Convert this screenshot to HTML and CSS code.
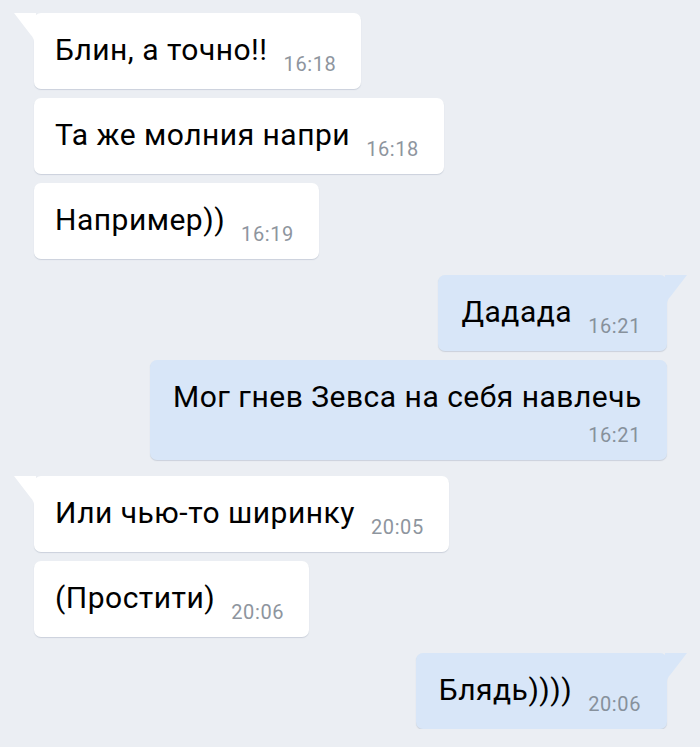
FILE: index.html
```html
<!DOCTYPE html>
<html lang="ru">
<head>
  <meta charset="UTF-8" />
  <meta name="viewport" content="width=device-width, initial-scale=1.0"/>
  <title>Чат</title>
  <link rel="stylesheet" href="styles.css">
</head>
<body>
  <main class="chat">
    <!-- incoming -->
    <div class="group in">
      <div class="bubble tail"><span class="text">Блин, а точно!!</span><span class="time">16:18</span></div>
      <div class="bubble"><span class="text">Та же молния напри</span><span class="time">16:18</span></div>
      <div class="bubble"><span class="text">Например))</span><span class="time">16:19</span></div>
    </div>

    <!-- outgoing -->
    <div class="group out">
      <div class="bubble tail"><span class="text">Дадада</span><span class="time">16:21</span></div>
      <div class="bubble"><span class="text">Мог гнев Зевса на себя навлечь</span><span class="time">16:21</span></div>
    </div>

    <div class="group in">
      <div class="bubble tail"><span class="text">Или чью-то ширинку</span><span class="time">20:05</span></div>
      <div class="bubble"><span class="text">(Простити)</span><span class="time">20:06</span></div>
    </div>

    <div class="group out">
      <div class="bubble tail"><span class="text">Блядь))))</span><span class="time">20:06</span></div>
    </div>
  </main>
</body>
</html>
```

FILE: styles.css
```css
body {
  margin: 0;
  font-family: Roboto, "Noto Sans", Arial, sans-serif;
  background-color: #ebeef3;
  color: #000;
}

.chat {
  display: flex;
  flex-direction: column;
  gap: 16px;
  padding: 13px 33px 0 34px;
}

.group {
  display: flex;
  flex-direction: column;
  gap: 9px;
}

.group.in {
  align-items: flex-start;
}

.group.out {
  align-items: flex-end;
}

.bubble {
  position: relative;
  display: flex;
  flex-wrap: wrap;
  align-items: flex-end;
  column-gap: 16px;
  row-gap: 4px;
  max-width: 517px;
  box-sizing: border-box;
  padding: 19px 25px 15px 21px;
  background-color: #fff;
  border-radius: 7px;
  box-shadow: 0 1px 1px rgba(60, 80, 110, 0.18);
}

.out .bubble {
  background-color: #d8e6f8;
  padding-right: 26px;
  padding-left: 23px;
}

.text {
  font-size: 30px;
  line-height: 36px;
  letter-spacing: 0.5px;
  white-space: nowrap;
  margin-bottom: 6px;
}

.time {
  margin-left: auto;
  font-size: 20px;
  line-height: 20px;
  letter-spacing: 0.6px;
  color: #8e959e;
}

.out .time {
  color: #87919c;
}

/* bubble tails */
.tail::before {
  content: "";
  position: absolute;
  top: 0;
  width: 22px;
  height: 32px;
  background-color: inherit;
}

.in .tail::before {
  left: -20px;
  clip-path: path("M0 0 H22 V32 H20 V29 Q20 25 16.5 21.5 Z");
}

.out .tail::before {
  right: -20px;
  clip-path: path("M22 0 H0 V32 H2 V29 Q2 25 5.5 21.5 Z");
}
```
